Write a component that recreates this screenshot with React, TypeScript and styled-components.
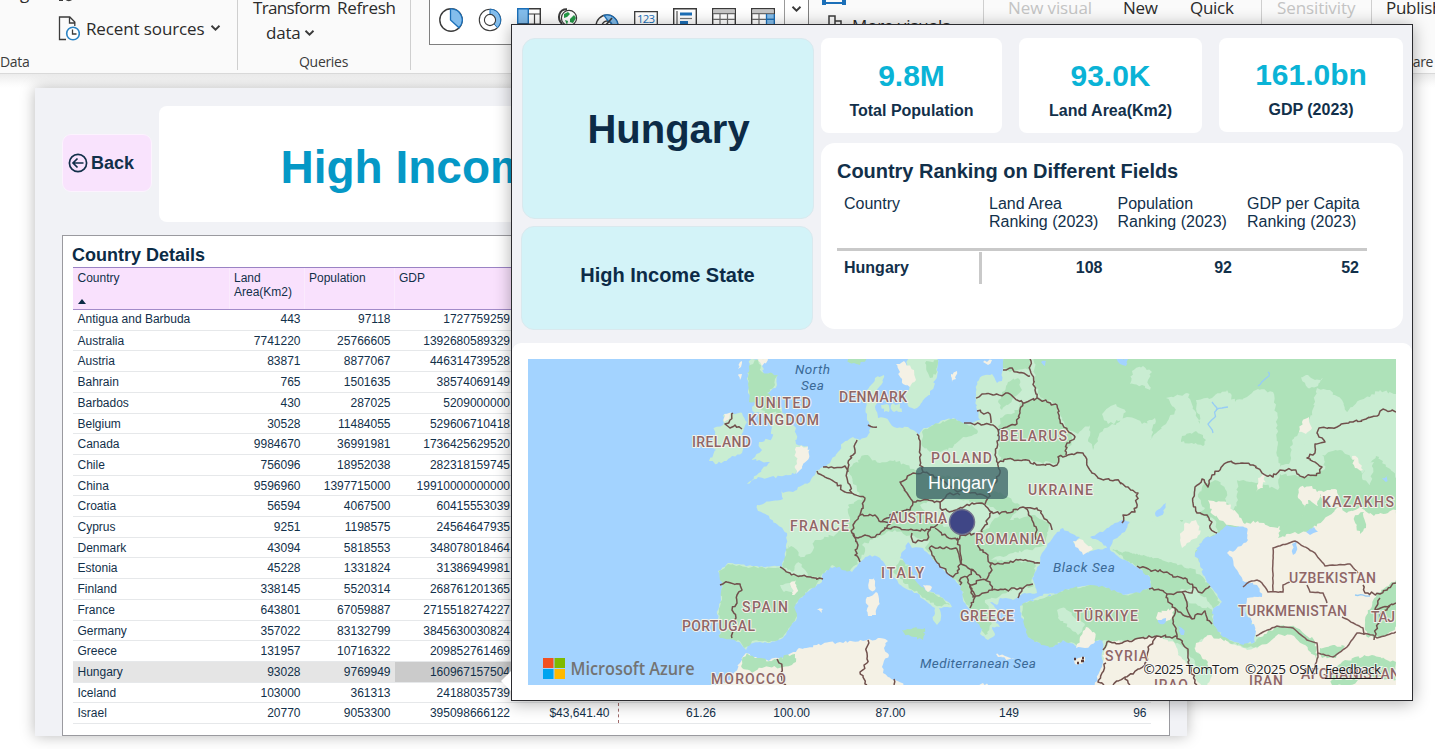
import React from "react";
import styled, { createGlobalStyle } from "styled-components";

const Global = createGlobalStyle`
  html, body { margin: 0; padding: 0; background: #fff; }
  body { overflow: hidden; }
  *, *::before, *::after { box-sizing: border-box; }
`;

const navy = "#12304a";
const arial = `"Liberation Sans", Arial, sans-serif`;
const segoe = `"Open Sans", "Segoe UI", sans-serif`;

const Screen = styled.div`
  position: relative;
  width: 1435px;
  height: 749px;
  overflow: hidden;
  background: #fff;
  font-family: ${arial};
  color: ${navy};
`;

/* ---------- Ribbon ---------- */

const Ribbon = styled.header`
  position: relative;
  display: flex;
  height: 74px;
  overflow: hidden;
  background: #fafafa;
  border-bottom: 1px solid #d9d9d9;
  font-family: ${segoe};
  color: #2b2b2b;
`;

const RibbonShade = styled.div`
  height: 14px;
  background: linear-gradient(#ececec, #fbfbfb 70%, #fff);
`;

const Group = styled.section<{ $w: number; $last?: boolean }>`
  flex: none;
  display: flex;
  flex-direction: column;
  width: ${(p) => p.$w}px;
  height: 70px;
  border-right: ${(p) => (p.$last ? "0" : "1px solid #cfcfcf")};
`;

const GroupBody = styled.div<{ $left?: number }>`
  flex: none;
  display: flex;
  height: 57px;
  margin-top: -5px;
  padding-left: ${(p) => p.$left ?? 0}px;
`;

const GroupLabel = styled.div<{ $left?: number }>`
  flex: none;
  padding-left: ${(p) => p.$left ?? 0}px;
  font-size: 14px;
  line-height: 20px;
  letter-spacing: -0.3px;
  white-space: nowrap;
  color: #3b3b3b;
`;

const RibbonButton = styled.div<{ $w: number; $off?: boolean; $ls?: number }>`
  flex: none;
  width: ${(p) => p.$w}px;
  font-size: 17px;
  line-height: 25px;
  letter-spacing: ${(p) => p.$ls ?? -0.3}px;
  white-space: nowrap;
  color: ${(p) => (p.$off ? "#c4c4c4" : "#2b2b2b")};
`;

const SecondLine = styled.div`
  display: flex;
  align-items: center;
  gap: 3px;
  padding-left: 13px;
  letter-spacing: -0.2px;
`;

const UpperCommand = styled.div`
  width: 58px;
  margin-top: -15px;
  padding-left: 20px;
  font-size: 17px;
  line-height: 25px;
`;

const SourceList = styled.div`
  display: flex;
  flex-direction: column;
`;

const SourceRow = styled.div<{ $h: number }>`
  display: flex;
  align-items: center;
  gap: 6px;
  height: ${(p) => p.$h}px;
  font-size: 17px;
  letter-spacing: -0.12px;
  white-space: nowrap;
`;

const Gallery = styled.div`
  display: flex;
  align-items: flex-start;
  width: 380px;
  height: 50px;
  margin-left: 18px;
  background: #fff;
  border: 1px solid #7f7f7f;
`;

const GalleryIcons = styled.div`
  display: flex;
  gap: 15px;
  width: 355px;
  padding: 12px 0 0 9px;
`;

const GalleryScroll = styled.div`
  width: 24px;
  height: 48px;
  padding: 0 0 0 6px;
  border-left: 1px solid #9a9a9a;
`;

const MoreVisuals = styled.div`
  display: flex;
  flex-direction: column;
  padding-left: 13px;
`;

const Chevron = () => (
  <svg width="11" height="8" viewBox="0 0 11 8" fill="none" stroke="#3a3a3a" strokeWidth="1.9">
    <path d="M1.5 1.8 5.500 5.700l4-3.900" />
  </svg>
);

const ink = "#3b3b3b";
const blue = "#1b6fb8";
const sky = "#83bdec";

const galleryArt: React.ReactNode[] = [
  <>
    <circle cx="12" cy="12" r="11.2" fill="#fff" stroke={ink} strokeWidth="1.4" />
    <path d="M11.5.8a11.2 11.2 0 0 1 8.5 19l-8.5-7.8z" fill={sky} stroke={blue} strokeWidth="1.3" />
  </>,
  <>
    <circle cx="12" cy="12" r="10.7" fill="#fff" stroke={ink} strokeWidth="1.1" />
    <path d="M12 1.2a10.8 10.8 0 0 1 7.4 18.5l-3.6-4A5.6 5.6 0 0 0 12 6.4z" fill={sky} stroke={blue} />
    <circle cx="12" cy="12" r="5.6" fill="#fff" stroke={ink} strokeWidth="1.1" />
  </>,
  <>
    <path d="M.7.7h22.6v22.6H.7z" fill="#fff" stroke={ink} strokeWidth="1.4" />
    <path d="M.7.7h10.6v15H.7z" fill={sky} stroke={blue} strokeWidth="1.4" />
    <path d="M11.5 6h12M17.5 6v10M.7 16h22.6" stroke={ink} strokeWidth="1.2" fill="none" />
  </>,
  <>
    <circle cx="13" cy="10" r="7.6" fill="#fff" stroke={ink} strokeWidth="1.2" />
    <path d="M8 6l4-2 2 2-3 3-3 1zM14 11l4-4 2 3-3 5-3-1zM9 12l3 1-1 4z" fill="#259a48" />
    <path d="M11 1.2C3 1 .5 10 6 16" stroke={ink} strokeWidth="2" fill="none" />
    <path d="M6 16c3 3 8 4 12 1" stroke={ink} strokeWidth="1.5" fill="none" />
  </>,
  <>
    <path d="M1 18a11 11 0 0 1 22 0h-6a5 5 0 0 0-10 0z" fill="#fff" stroke={ink} strokeWidth="1.3" />
    <path d="M9 7.400A11 11 0 0 1 23 18h-6a5 5 0 0 0-4-5z" fill={sky} stroke={blue} strokeWidth="1.3" />
    <path d="M10 18l7-8" stroke={ink} strokeWidth="1.6" />
  </>,
  <>
    <path d="M.7 3.7h22.6v17H.7z" fill="#fff" stroke={ink} strokeWidth="1.3" />
    <text x="3" y="15" fontSize="11.5" textLength="18" fontFamily="Open Sans, sans-serif" fill={blue}>123</text>
  </>,
  <>
    <path d="M.7.7h22.6v22.6H.7z" fill="#fff" stroke={ink} strokeWidth="1.4" />
    <path d="M4 3v18" stroke="#777" strokeWidth="1.5" />
    <path d="M7 4.5h12v3H7zM7 13h8v3H7z" fill={blue} />
    <path d="M7 10.5h12" stroke="#777" strokeWidth="1.2" />
  </>,
  <>
    <path d="M.7.7h22.6v22.6H.7z" fill="#fff" stroke={ink} strokeWidth="1.4" />
    <path d="M1.4 1.4h21.2v4H1.4z" fill="#c6c6c6" />
    <path d="M1 5.7h22M1 11.3h22M1 17h22M8 6v17M15.5 6v17" stroke="#6b6b6b" strokeWidth="1.2" />
  </>,
  <>
    <path d="M.7.7h22.6v22.6H.7z" fill="#fff" stroke={ink} strokeWidth="1.4" />
    <path d="M1.4 1.4h21.2v4H1.4z" fill="#c6c6c6" />
    <path d="M15.5 6h7.3v17h-7.3z" fill={sky} />
    <path d="M1 5.7h22M1 11.3h22M1 17h22M8 6v17" stroke="#6b6b6b" strokeWidth="1.2" />
    <path d="M15.5 6v17M23.3 6v17M15.5 11.3h8" stroke={blue} strokeWidth="1.3" />
  </>,
];

/* ---------- Report page ---------- */

const ReportPage = styled.main`
  display: flex;
  flex-direction: column;
  width: 1152px;
  height: 648px;
  margin-left: 35px;
  background: #f1f2f6;
  box-shadow: 0 0 14px rgba(0, 0, 0, 0.28);
`;

const PageHead = styled.div`
  display: flex;
  align-items: flex-start;
  height: 147px;
  padding: 18px 0 0 27px;
`;

const BackButton = styled.div`
  display: flex;
  align-items: center;
  gap: 3px;
  width: 90px;
  height: 58px;
  margin-top: 28px;
  padding-left: 5px;
  border: 1px solid #fcf3fe;
  border-radius: 9px;
  background: #f9e3fd;
  font-size: 18px;
  font-weight: 700;
`;

const TitleCard = styled.div`
  width: 1001px;
  height: 116px;
  margin-left: 7px;
  padding: 35px 0 0 121.500px;
  border-radius: 8px;
  background: #fff;
  font-size: 46px;
  line-height: 52px;
  font-weight: 700;
  color: #0598c6;
`;

const TableCard = styled.section`
  width: 1108px;
  height: 501px;
  margin-left: 27px;
  padding: 9px 0 0 10px;
  border: 1px solid #9a9a9f;
  background: #fff;
`;

const TableTitle = styled.h2`
  height: 22px;
  margin: 0 0 0 -1px;
  font-size: 18px;
  line-height: 20px;
  color: #0b2b45;
`;

const columns = "156.5px 75px 90px 119.5px 104.5px 101.5px 94px 95.5px 113.5px 127.5px";

const HeadRow = styled.div`
  display: grid;
  grid-template-columns: ${columns};
  width: 1078px;
  height: 43px;
  border-top: 1px solid #9a83c4;
  border-bottom: 1px solid #a28bc9;
  background: #f9e1fd;
`;

const HeadCell = styled.div`
  padding: 3px 0 0 4.500px;
  border-right: 1px solid #fbeafd;
  font-size: 12px;
  line-height: 14px;
`;

const SortMark = styled.div`
  width: 0;
  margin-top: 14px;
  border: 4.5px solid transparent;
  border-top: 0;
  border-bottom: 5px solid #0b2b45;
`;

const BodyRow = styled.div<{ $on?: boolean }>`
  display: grid;
  grid-template-columns: ${columns};
  width: 1078px;
  height: 20.715px;
  border-bottom: 1px solid #e6e8ea;
  background: ${(p) => (p.$on ? "#e5e5e5" : "transparent")};
`;

const Cell = styled.div<{ $name?: boolean; $on?: boolean; $edge?: boolean; $first?: boolean }>`
  padding: 0 ${(p) => (p.$edge ? 8 : 4)}px 0 4.500px;
  margin-top: ${(p) => (p.$first ? -1 : 0)}px;
  border-right: ${(p) => (p.$edge ? "1px dashed #a06a6a" : "0")};
  background: ${(p) => (p.$on ? "#cbcbcb" : "transparent")};
  font-size: 12px;
  line-height: 20px;
  text-align: ${(p) => (p.$name ? "left" : "right")};
`;

const rows: string[][] = [
  ["Antigua and Barbuda", "443", "97118", "1727759259"],
  ["Australia", "7741220", "25766605", "1392680589329"],
  ["Austria", "83871", "8877067", "446314739528"],
  ["Bahrain", "765", "1501635", "38574069149"],
  ["Barbados", "430", "287025", "5209000000"],
  ["Belgium", "30528", "11484055", "529606710418"],
  ["Canada", "9984670", "36991981", "1736425629520"],
  ["Chile", "756096", "18952038", "282318159745"],
  ["China", "9596960", "1397715000", "19910000000000"],
  ["Croatia", "56594", "4067500", "60415553039"],
  ["Cyprus", "9251", "1198575", "24564647935"],
  ["Denmark", "43094", "5818553", "348078018464"],
  ["Estonia", "45228", "1331824", "31386949981"],
  ["Finland", "338145", "5520314", "268761201365"],
  ["France", "643801", "67059887", "2715518274227"],
  ["Germany", "357022", "83132799", "3845630030824"],
  ["Greece", "131957", "10716322", "209852761469"],
  ["Hungary", "93028", "9769949", "160967157504"],
  ["Iceland", "103000", "361313", "24188035739"],
  ["Israel", "20770", "9053300", "395098666122", "$43,641.40", "61.26", "100.00", "87.00", "149", "96"],
];

/* ---------- Report tooltip ---------- */

const Popup = styled.aside`
  position: absolute;
  left: 511px;
  top: 24px;
  width: 902px;
  height: 677px;
  border: 1px solid #2b2b2f;
  background: #f1f2f6;
  box-shadow: 0 2px 16px rgba(0, 0, 0, 0.32);
`;

const PopupArrow = styled.div`
  position: absolute;
  left: -11px;
  top: 646px;
  border: 10px solid transparent;
  border-left: 0;
  border-right: 10px solid #fff;
`;

const PopupTop = styled.div`
  display: flex;
  gap: 7px;
  height: 318px;
  padding: 13px 0 0 10px;
`;

const HeroColumn = styled.div`
  display: flex;
  flex-direction: column;
  gap: 7px;
  width: 292px;
`;

const Hero = styled.div<{ $h: number; $size: number; $shift: number; $drop: number }>`
  display: flex;
  align-items: center;
  justify-content: center;
  width: 292px;
  height: ${(p) => p.$h}px;
  margin-left: ${(p) => p.$shift}px;
  padding: ${(p) => p.$drop}px 0 6px 1px;
  border: 1px solid #d9e9ee;
  border-radius: 13px;
  background: #d3f3f8;
  font-size: ${(p) => p.$size}px;
  font-weight: 700;
  color: #0c2b47;
`;

const StatColumn = styled.div`
  display: flex;
  flex-direction: column;
  gap: 10px;
`;

const StatRow = styled.div`
  display: flex;
  align-items: flex-start;
  gap: 17px;
  height: 95px;
`;

const StatCard = styled.div<{ $w: number; $lift?: boolean }>`
  width: ${(p) => p.$w}px;
  height: ${(p) => (p.$lift ? 94 : 95)}px;
  padding-top: ${(p) => (p.$lift ? 20 : 21)}px;
  border-radius: 8px;
  background: #fff;
  text-align: center;
  font-weight: 700;
`;

const StatValue = styled.div`
  font-size: 30px;
  line-height: 34px;
  color: #0ab3d6;
`;

const StatLabel = styled.div`
  margin-top: 9px;
  font-size: 16px;
  line-height: 18px;
`;

const RankCard = styled.section`
  width: 582px;
  height: 186px;
  padding: 17px 0 0 16px;
  border-radius: 14px;
  background: #fff;
`;

const RankTitle = styled.h3`
  margin: 0;
  font-size: 20px;
  line-height: 22px;
  letter-spacing: -0.03px;
`;

const RankGrid = styled.div<{ $head?: boolean }>`
  display: grid;
  grid-template-columns: 145px 128.5px 129.5px 127px;
  width: 530px;
  height: ${(p) => (p.$head ? 56 : 32)}px;
  margin-top: ${(p) => (p.$head ? 13 : 1)}px;
  border-bottom: ${(p) => (p.$head ? "3px solid #c9c9c9" : "0")};
  font-size: 16px;
  line-height: ${(p) => (p.$head ? 18 : 31)}px;
  font-weight: ${(p) => (p.$head ? 400 : 700)};
`;

const RankCell = styled.div<{ $num?: boolean; $pad?: number; $rule?: boolean }>`
  padding-left: 7px;
  padding-right: ${(p) => p.$pad ?? 0}px;
  text-align: ${(p) => (p.$num ? "right" : "left")};
  border-right: ${(p) => (p.$rule ? "3px solid #c9c9c9" : "0")};
  white-space: nowrap;
`;

const MapPanel = styled.div`
  position: relative;
  height: 357px;
  padding: 16px;
  border-radius: 9px 9px 0 0;
  background: #fff;
`;

const MapSvg = styled.svg`
  display: block;
`;

const MapTip = styled.div`
  position: absolute;
  left: 404px;
  top: 124px;
  width: 92px;
  height: 32px;
  border-radius: 5px;
  background: rgba(58, 98, 101, 0.77);
  font-size: 18px;
  line-height: 32px;
  text-align: center;
  color: #fff;
`;

/* ---------- Map drawing ---------- */

type Pt = [number, number];

const parse = (s: string): Pt[] =>
  s.trim().split(/\s+/).map((p) => p.split(",").map(Number) as Pt);

// Breaks straight segments into small deterministic wiggles, as coasts and frontiers have.
const rough = (s: string, amp: number, closed = false): string => {
  const pts = parse(s);
  if (closed) pts.push(pts[0]);
  let seed = Math.round(pts[0][0] * 31 + pts[0][1] * 17);
  const rnd = () => {
    seed = (seed * 1103515245 + 12345) % 2147483648;
    return seed / 2147483648 - 0.5;
  };
  const out: string[] = [`M${pts[0][0]} ${pts[0][1]}`];
  for (let i = 1; i < pts.length; i++) {
    const [x0, y0] = pts[i - 1];
    const [x1, y1] = pts[i];
    const len = Math.hypot(x1 - x0, y1 - y0);
    const n = Math.max(1, Math.round(len / 2.6));
    for (let k = 1; k <= n; k++) {
      const t = k / n;
      const j = k === n ? 0 : amp;
      out.push(`L${(x0 + (x1 - x0) * t + rnd() * j).toFixed(1)} ${(y0 + (y1 - y0) * t + rnd() * j).toFixed(1)}`);
    }
  }
  return out.join("") + (closed ? "Z" : "");
};

const light = "#c9edd2";
const mid = "#aee2b9";
const sand = "#f4f1e5";
const sea = "#a3d3ff";

const areas: [string, string][] = [
  [light, "1003,355 1003,368 1002,381 997,383 992,374 982,376 977,382 976,400 977,410 980,420 972,423 965,425 953,418 943,420 930,427 922,430 919,435 913,430 908,427 897,428 890,423 885,418 878,418 875,407 878,400 877,390 883,382 884,375 875,378 867,390 866,407 867,420 871,427 867,437 860,440 853,437 843,443 838,452 830,463 823,467 817,470 810,482 798,487 797,490 783,493 781,489 783,499 772,501 757,505 758,511 767,515 778,525 787,533 785,557 782,567 752,566 728,563 718,571 722,582 721,600 717,614 720,625 720,638 732,638 741,644 746,650 750,643 760,642 770,643 783,638 790,627 797,618 794,608 798,600 810,590 822,582 823,573 830,567 843,568 852,572 860,562 870,555 880,558 887,568 893,577 903,587 917,593 927,602 935,608 933,620 937,625 941,617 939,608 952,607 943,598 932,592 923,590 913,578 910,567 900,558 902,545 908,542 912,548 923,548 937,563 953,578 962,587 963,600 970,610 977,620 982,627 980,634 988,640 995,635 992,627 1000,627 993,618 999,612 990,602 997,605 1000,598 1013,600 1025,593 1037,593 1035,585 1032,578 1040,563 1042,553 1050,542 1057,532 1063,528 1070,533 1080,537 1073,542 1083,553 1095,550 1107,548 1098,540 1090,537 1105,530 1122,520 1130,522 1125,532 1113,540 1110,550 1120,558 1137,567 1150,577 1151,588 1140,593 1123,595 1107,588 1090,585 1073,588 1060,593 1043,598 1027,602 1020,606 1021,617 1027,625 1028,637 1040,643 1053,647 1063,640 1080,647 1090,642 1103,640 1102,653 1102,667 1098,680 1095,690 1400,690 1400,355"],
  // Northern forests
  [mid, "1034,355 1035,385 1040,397 1057,404 1062,420 1068,430 1078,434 1090,425 1088,440 1093,450 1103,430 1127,417 1138,420 1142,424 1155,418 1150,440 1166,424 1176,410 1166,398 1187,393 1193,407 1200,424 1196,400 1212,398 1227,390 1235,402 1247,397 1258,389 1273,392 1277,420 1277,450 1280,467 1289,464 1292,440 1306,426 1312,412 1317,388 1330,390 1342,400 1347,412 1360,400 1380,390 1400,397 1400,355"],
  [light, "1102,414 1108,408 1116,404 1126,412 1122,420 1108,424"],
  [light, "1132,371 1143,366 1152,372 1148,380 1150,390 1142,385 1130,384"],
  [light, "1301,377 1308,375 1315,380 1323,378 1318,386 1308,388"],
  [mid, "1182,436 1196,431 1206,440 1203,446 1194,444 1181,442"],
  [mid, "998,433 1000,418 1018,410 1022,402 1037,398 1057,405 1060,420 1068,430 1072,440 1066,453 1057,463 1040,462 1023,459 1000,461"],
  [mid, "1003,355 1003,368 1010,372 1030,368 1030,355"],
  [mid, "1008,382 1018,378 1022,390 1012,400 1002,410 998,402"],
  // Central Europe
  [mid, "922,432 943,421 953,419 972,425 978,432 960,440 948,450 930,452 922,446"],
  [mid, "848,470 865,455 880,463 895,460 915,470 925,474 960,478 985,490 1000,492 1020,505 1010,520 1035,515 1050,525 1045,545 1030,550 1000,556 990,560 1030,562 1036,566 1032,578 1034,586 1015,588 1000,596 985,600 990,610 995,618 985,635 975,618 964,600 961,586 950,575 937,562 925,548 930,540 905,535 895,530 885,534 870,540 860,560 850,571 832,565 820,578 810,578 798,560 812,552 815,540 835,535 850,520 848,505 862,500"],
  [light, "920,505 945,497 965,500 985,505 1002,512 985,530 970,534 955,530 930,520"],
  [light, "862,545 880,538 900,545 908,541 902,552 898,558 880,556 870,553"],
  [mid, "900,560 910,568 915,580 925,590 940,597 950,605 940,606 925,598 905,584 893,572"],
  [mid, "728,564 752,567 782,568 790,574 822,579 812,588 800,598 795,606 797,616 790,627 783,637 770,642 752,641 745,648 738,640 720,638 720,625 718,614 722,600 722,582 719,571"],
  [sand, "790,583 796,580 797,592 792,595"],
  [light, "780,585 790,583 793,592 784,592"],
  [mid, "785,557 788,545 797,550 800,560 792,572 783,568"],
  // Anatolia and Caucasus
  [mid, "1022,604 1043,598 1060,592 1073,588 1090,585 1107,588 1123,595 1140,593 1151,588 1150,577 1137,567 1112,550 1140,554 1170,562 1190,568 1203,577 1214,592 1220,602 1212,610 1214,625 1225,637 1240,644 1255,642 1270,635 1290,628 1278,640 1255,648 1225,642 1200,640 1196,652 1210,662 1215,672 1198,668 1186,650 1170,638 1140,642 1105,640 1090,642 1080,647 1063,640 1053,647 1040,643 1028,637 1024,620"],
  [light, "1057,610 1065,608 1075,618 1085,625 1078,635 1070,628 1058,618"],
  [light, "1180,590 1196,588 1210,604 1213,610 1200,606 1186,600"],
  [sand, "1158,612 1175,608 1170,620 1160,622 1156,618"],
  [sand, "1080,637 1086,627 1094,632 1095,642 1085,648 1076,648"],
  [sand, "1073,541 1083,540 1093,549 1083,555 1078,548"],
  // Kazakh steppe
  [mid, "1203,485 1215,480 1226,488 1237,480 1250,482 1265,485 1278,490 1280,474 1305,478 1325,469 1322,455 1340,450 1357,462 1362,474 1376,456 1400,480 1400,560 1180,560 1180,520 1190,522 1205,508 1198,497"],
  [light, "1226,470 1236,472 1238,500 1232,515 1226,500"],
  [light, "1365,465 1374,462 1370,485 1362,478"],
  [light, "1300,445 1312,440 1318,455 1300,462 1294,458"],
  [sand, "1352,456 1358,458 1363,470 1355,468"],
  [sand, "1302,422 1309,417 1312,428 1306,434 1299,432"],
  [sand, "1258,478 1266,474 1263,488 1256,492"],
  [light, "1182,522 1195,512 1215,520 1217,533 1203,540 1195,553 1200,563 1190,568 1168,560 1110,548 1125,532 1130,522 1150,520"],
  [sand, "1180,540 1184,524 1196,520 1200,534 1190,542 1182,548"],
  [sand, "1208,500 1226,502 1237,513 1245,524 1258,521 1270,527 1282,526 1280,536 1290,533 1300,523 1306,510 1298,498 1300,487 1312,486 1317,492 1337,490 1340,507 1347,513 1360,507 1374,516 1396,510 1400,560 1400,690 1205,690 1212,676 1208,662 1196,652 1196,643 1210,635 1228,642 1247,650 1267,644 1286,630 1270,636 1256,636 1230,560 1226,553 1245,530 1225,523 1212,514"],
  [mid, "1280,526 1300,522 1308,500 1318,506 1320,494 1332,506 1340,508 1325,518 1308,532 1290,534 1278,538"],
  [mid, "1256,640 1277,626 1295,627 1314,640 1318,660 1308,650 1294,636 1278,634 1258,645"],
  [mid, "1320,648 1333,645 1345,646 1336,658 1322,658"],
  [mid, "1365,620 1376,595 1396,580 1400,625 1380,638 1366,636"],
  [mid, "1330,672 1345,660 1372,655 1396,662 1396,680 1370,676 1350,685 1332,685"],
  [mid, "1354,518 1364,512 1366,528 1360,534"],
  [sand, "1108,643 1140,639 1158,636 1174,642 1178,655 1192,668 1202,690 1092,690 1102,667 1104,652"],
  // North Africa
  [sand, "710,687 730,680 740,663 746,653 753,657 767,660 783,658 797,650 817,645 840,642 867,640 880,638 888,641 884,648 889,655 882,667 883,673 895,680 907,687"],
  [mid, "742,661 747,653 755,658 770,661 795,654 796,662 783,667 762,668 752,673 742,668"],
  [sand, "975,687 983,683 992,687"],
  // British Isles and Ireland
  [light, "750,360 768,356 762,366 764,374 778,375 777,385 767,395 777,400 782,410 790,420 796,428 796,444 807,446 808,457 800,470 795,474 783,476 767,478 758,477 747,484 757,475 763,468 770,462 752,460 755,457 762,450 759,442 772,438 772,427 763,413 755,413 752,407 755,402 748,393 748,377"],
  [mid, "750,365 758,360 762,372 778,375 775,385 767,393 778,402 782,412 765,414 757,402 749,402 748,377"],
  [sand, "758,358 768,358 762,366"],
  [sand, "796,447 808,446 809,458 800,470 796,474"],
  [sand, "740,362 742,361 741,367 738,369"],
  [sand, "738,375 742,374 740,380"],
  [light, "712,427 723,425 723,415 730,413 742,413 747,422 743,432 743,440 742,453 730,458 717,464 709,461 716,450 706,446 716,436"],
  [sand, "724,414 731,412 728,420 724,422"],
  // Scandinavia
  [light, "908,358 937,355 938,372 930,395 925,398 917,408 909,407 905,395 911,382 905,370"],
  [sand, "896,364 904,361 914,370 916,380 910,387 903,384"],
  [mid, "845,355 872,355 860,365 850,363"],
  [mid, "925,363 938,360 937,372 930,378"],
  [light, "891,405 900,403 902,412 894,412"],
  [light, "881,405 887,404 889,412 884,412"],
  [sand, "951,374 957,371 956,379 952,382"],
  [sand, "983,362 992,360 988,365"],
  // Mediterranean islands
  [sand, "869,579 875,576 875,590 870,590"],
  [sand, "867,597 876,592 879,602 876,615 868,616"],
  [mid, "902,630 913,628 925,628 923,640 914,637 904,633"],
  [sand, "996,654 1005,656 1015,658 1010,659 998,657"],
  [sand, "817,610 823,609 822,613"],
  [sand, "923,585 932,587 928,592"],
  [sand, "1073,660 1085,657 1082,664 1075,664"],
  // Inland waters
  [sea, "1217,533 1227,525 1247,528 1248,540 1237,548 1227,553 1233,560 1237,570 1245,582 1257,585 1262,597 1247,598 1245,610 1255,630 1255,642 1240,644 1223,637 1213,623 1213,610 1222,602 1215,592 1203,575 1200,563 1195,553 1203,540"],
  [sea, "1116,357 1128,359 1126,366 1120,364"],
  [sea, "1292,544 1297,541 1296,552 1293,555"],
  [sea, "1306,532 1314,527 1318,532 1310,535"],
  [sea, "1155,513 1166,503 1164,512 1157,517"],
  [sea, "1158,620 1166,618 1164,624 1160,624"],
  [sea, "1178,626 1184,630 1185,637 1181,635"],
  [sea, "1382,478 1389,475 1386,482"],
  [sea, "1041,362 1046,361 1045,366"],
  [light, "1055,593 1040,596 1030,600 1040,599"],
];

const rivers = [
  "1212,402 1217,408 1214,418 1208,424 1213,433",
  "1216,410 1222,408 1228,407",
  "1258,386 1264,380 1269,376 1268,372",
  "1355,595 1370,596",
];

const frontiers = [
  "1003,370 1010,368 1017,372 1030,376",
  "1030,359 1031,373 1035,390 1037,398 1023,403",
  "976,398 982,394 993,395 1010,394 1017,400 1023,403",
  "1037,398 1047,402 1057,405 1060,420 1067,430 1075,437 1067,443 1066,455",
  "998,463 1007,459 1023,460 1040,465 1057,465 1058,457 1066,456 1072,454 1083,453 1088,467 1098,478 1115,480 1128,487 1138,493 1135,512 1123,515 1122,523",
  "1023,403 1020,413 1015,425 1007,427 998,430",
  "977,411 990,414 991,423",
  "964,423 980,424 993,425 998,430 999,440 995,455 998,463 1000,473 993,487 988,498",
  "917,434 920,447 920,460 923,472 913,473 900,482 907,493 913,502 923,500 940,502 950,493 960,495",
  "923,472 933,475 945,482 955,490 967,492 980,494 988,498 985,504",
  "940,502 942,510 953,511 962,508 972,503 985,505 992,512 985,525 980,533",
  "992,512 1007,513 1023,507 1037,508 1047,520 1052,530",
  "1025,508 1032,520 1037,530 1036,540",
  "857,440 855,450 848,463 847,472 848,483 852,493 865,498 860,515",
  "817,471 827,478 837,483 845,492 852,493",
  "823,467 834,468 845,466 848,472",
  "860,515 875,515 879,521 890,524 884,530 875,537 865,535 858,538 852,533 853,525 860,515",
  "853,533 858,545 855,555 860,562",
  "882,521 887,518 895,513 910,510 913,502",
  "884,528 900,528 913,530 930,530 937,525 943,520 942,510",
  "912,533 913,542 927,540 930,530",
  "935,528 947,537 957,540 963,535 977,533",
  "930,547 940,547 957,549 960,560 958,573 953,577 940,567 932,555 930,547",
  "957,538 960,548 961,562 968,568 976,573 981,578",
  "977,533 980,550 988,555 990,563 1003,564 1018,560 1028,561 1040,563",
  "990,563 992,570 985,580",
  "970,585 980,580 990,582 992,590 980,595 973,597 970,585",
  "960,585 961,578 967,577 974,570",
  "967,577 970,585 975,597 970,608",
  "992,590 1007,590 1020,588 1027,585 1033,584",
  "1022,588 1018,598",
  "780,567 790,573 800,576 823,579",
  "720,585 727,582 740,584 742,590 737,595 737,603 732,610 736,618 732,627 732,638",
  "733,413 730,420 725,424 730,428 735,425 742,429",
  "868,640 867,653 867,663 860,672 867,685",
  "894,679 894,685",
  "777,659 782,667 780,675 786,685",
  "1137,566 1150,570 1167,572 1173,577 1185,578 1193,587 1202,593 1210,586",
  "1149,589 1160,590 1167,594 1182,592 1192,593 1193,587",
  "1167,594 1168,602 1175,608 1183,615 1192,619",
  "1182,592 1187,603 1188,612 1192,619 1205,611 1207,620 1212,624",
  "1175,608 1173,620 1177,635 1188,652 1188,662 1195,680 1197,685",
  "1103,650 1107,642 1122,643 1140,638 1157,636 1177,637",
  "1157,636 1148,647 1147,657 1145,665 1125,677 1113,685",
  "1106,663 1102,673 1098,682 1104,685",
  "1125,677 1130,685",
  "868,425 877,427",
  "1217,533 1210,528 1212,522 1207,515 1197,513 1193,503 1195,487 1202,479 1208,487 1212,475 1228,462 1242,463 1253,465 1262,473 1273,477 1280,470 1293,470 1303,477 1320,473 1322,467 1307,458 1315,453 1315,444 1325,442 1317,433 1319,428 1337,427 1353,422 1377,416 1383,409 1396,412",
  "1380,598 1375,610 1396,603",
  "1363,585 1365,593 1380,594 1387,590 1396,583",
  "1374,640 1377,627 1382,612 1390,606",
];

const straightFrontiers = [
  "1243,587 1249,582 1257,580 1262,583 1268,592 1283,592 1283,585 1290,582",
  "1273,591 1273,548 1295,541 1315,553 1325,566 1350,564 1358,573",
  "1307,585 1310,592 1323,593 1327,603",
  "1342,617 1363,628 1364,635",
  "1256,636 1263,632 1277,626 1293,628 1307,640 1317,643 1318,657 1312,675",
  "1318,653 1333,657 1347,647 1357,633 1373,635 1377,638 1387,635 1396,632",
];

const Country = styled.text`
  font-family: Roboto, sans-serif;
  font-size: 14px;
  font-weight: 500;
  fill: #8f6666;
  stroke: #f3f3ec;
  stroke-width: 2px;
  stroke-linejoin: round;
  paint-order: stroke;
`;

const SeaName = styled.text`
  font-family: Roboto, sans-serif;
  font-size: 13.500px;
  font-style: italic;
  fill: #3a6996;
`;

const Credit = styled.text`
  font-family: ${segoe};
  font-size: 13.5px;
  fill: #1c1c1c;
  stroke: rgba(255, 255, 255, 0.65);
  stroke-width: 2px;
  paint-order: stroke;
`;

const countries: [string, number, number, number][] = [
  ["UNITED", 755, 407.5, 56],
  ["KINGDOM", 748, 425, 71],
  ["IRELAND", 692, 446.5, 59],
  ["DENMARK", 839, 401.5, 68],
  ["BELARUS", 1000, 440.5, 67],
  ["POLAND", 931, 463, 61],
  ["UKRAINE", 1028, 494.5, 65],
  ["FRANCE", 790, 530.5, 59],
  ["AUSTRIA", 889, 523, 58],
  ["ROMANIA", 975, 544, 70],
  ["ITALY", 881, 577.5, 43],
  ["SPAIN", 742, 611.5, 46],
  ["PORTUGAL", 682, 631, 73],
  ["GREECE", 960, 620.5, 54],
  ["TÜRKIYE", 1074, 620.5, 64],
  ["KAZAKHS", 1322, 506.5, 72],
  ["UZBEKISTAN", 1289, 583, 87],
  ["TURKMENISTAN", 1238, 616, 109],
  ["TAJ", 1371, 622, 24],
  ["SYRIA", 1105, 661, 43],
  ["IRAQ", 1154, 690, 34],
  ["IRAN", 1249, 686, 34],
  ["AFGHANISTAN", 1301, 679, 99],
  ["MOROCCO", 711, 683.5, 75],
];

const EuropeMap = () => (
  <MapSvg width="868" height="326" viewBox="528 359 868 326">
    <rect x="528" y="359" width="868" height="326" fill={sea} />
    {areas.map(([c, d], i) => (
      <path key={i} d={rough(d, i === 0 ? 2 : 3, true)} fill={c} />
    ))}
    {rivers.map((d, i) => (
      <path key={i} d={rough(d, 2)} fill="none" stroke="#97ccf5" strokeWidth="1.3" />
    ))}
    {frontiers.map((d, i) => (
      <path key={i} d={rough(d, 2.8)} fill="none" stroke="#70504c" strokeWidth="1.5" strokeLinejoin="round" />
    ))}
    {straightFrontiers.map((d, i) => (
      <path key={i} d={rough(d, 0.8)} fill="none" stroke="#7b5a57" strokeWidth="1.5" />
    ))}
    {countries.map(([name, x, y, w]) => (
      <Country key={name} x={x} y={y} textLength={w} lengthAdjust={name === "AUSTRIA" ? "spacingAndGlyphs" : "spacing"}>{name}</Country>
    ))}
    <SeaName x="795" y="374" textLength="35">North</SeaName>
    <SeaName x="801" y="389.500" textLength="23">Sea</SeaName>
    <SeaName x="1053" y="572" textLength="62">Black Sea</SeaName>
    <SeaName x="920" y="668" textLength="116">Mediterranean Sea</SeaName>
    <path d="M1074 659h2m1 4h2m3-5h2m-3 3h3" stroke="#5a3c3a" strokeWidth="2.4" />
    <circle cx="962" cy="522" r="12.5" fill="#3f4686" stroke="#72728c" strokeWidth="1.5" />
    <path d="M543 658h10.5v10H543z" fill="#f25022" />
    <path d="M554.500 658H565v10h-10.500z" fill="#7fba00" />
    <path d="M543 669h10.500v10H543z" fill="#00a4ef" />
    <path d="M554.500 669H565v10h-10.500z" fill="#ffb900" />
    <text x="570.5" y="675" fontFamily="Open Sans, sans-serif" fontWeight="600" fontSize="17.5" textLength="124" lengthAdjust="spacingAndGlyphs" fill="#737373">Microsoft Azure</text>
    <Credit x="1143.500" y="674" textLength="95.500">©2025 TomTom</Credit>
    <Credit x="1245" y="674" textLength="73.500">©2025 OSM</Credit>
    <Credit x="1325" y="674" textLength="56">Feedback</Credit>
    <path d="M1325 678.500h56" stroke="#1c1c1c" />
  </MapSvg>
);

export default function App() {
  return (
    <Screen>
      <Global />
      <Ribbon>
        <Group $w={238}>
          <GroupBody>
            <UpperCommand>g</UpperCommand>
            <SourceList>
              <SourceRow $h={20}>
                <svg width="22" height="20" viewBox="0 0 22 20" fill="none" stroke={ink} strokeWidth="1.8">
                  <path d="M1 5h4M7.500 3c1 3 5.500 3 7 0" />
                </svg>
              </SourceRow>
              <SourceRow $h={26}>
                <svg width="22" height="25" viewBox="0 0 22 25" fill="none" stroke={ink} strokeWidth="1.3">
                  <path d="M8 23.500H1.500V1h10.300l5 5v4M11.500 1v6h6" />
                  <circle cx="15" cy="17.500" r="6.300" fill="#fff" stroke="#2a83c4" strokeWidth="1.600" />
                  <path d="M14.500 13.500v4.500h4" />
                </svg>
                Recent sources
                <Chevron />
              </SourceRow>
            </SourceList>
          </GroupBody>
          <GroupLabel $left={0}>Data</GroupLabel>
        </Group>
        <Group $w={173}>
          <GroupBody $left={15}>
            <RibbonButton $w={84} $ls={-0.65}>
              Transform
              <SecondLine>data<Chevron /></SecondLine>
            </RibbonButton>
            <RibbonButton $w={60}>Refresh</RibbonButton>
          </GroupBody>
          <GroupLabel $left={61}>Queries</GroupLabel>
        </Group>
        <Group $w={573}>
          <GroupBody>
            <Gallery>
              <GalleryIcons>
                {galleryArt.map((art, i) => (
                  <svg key={i} width="24" height="24" viewBox="0 0 24 24" fill="none">{art}</svg>
                ))}
              </GalleryIcons>
              <GalleryScroll><Chevron /></GalleryScroll>
            </Gallery>
            <MoreVisuals>
              <SourceRow $h={14}>
                <svg width="24" height="18" viewBox="0 0 24 18" fill={blue}>
                  <path d="M0 7h4v5H0zM20 7h4v5h-4zM4 9h16v2H4z" />
                </svg>
              </SourceRow>
              <SourceRow $h={32}>
                <svg width="24" height="24" viewBox="0 0 24 24" fill="none" stroke={ink} strokeWidth="1.500">
                  <path d="M7 24V3h6v21M13 8h6v16" />
                </svg>
                More visuals
              </SourceRow>
            </MoreVisuals>
          </GroupBody>
        </Group>
        <Group $w={278}>
          <GroupBody $left={24}>
            <RibbonButton $w={115} $off $ls={-0.1}>New visual</RibbonButton>
            <RibbonButton $w={67}>New</RibbonButton>
            <RibbonButton $w={60}>Quick</RibbonButton>
          </GroupBody>
        </Group>
        <Group $w={110}>
          <GroupBody $left={15}>
            <RibbonButton $w={90} $off $ls={-0.1}>Sensitivity</RibbonButton>
          </GroupBody>
        </Group>
        <Group $w={70} $last>
          <GroupBody $left={14}>
            <RibbonButton $w={60}>Publish</RibbonButton>
          </GroupBody>
          <GroupLabel $left={25}>Share</GroupLabel>
        </Group>
      </Ribbon>
      <RibbonShade />

      <ReportPage>
        <PageHead>
          <BackButton>
            <svg width="20" height="20" viewBox="0 0 20 20" fill="none" stroke={navy} strokeWidth="1.700">
              <circle cx="10" cy="10" r="8.600" />
              <path d="M15.500 10H5M9.500 5.500 5 10l4.500 4.500" />
            </svg>
            Back
          </BackButton>
          <TitleCard>High Income</TitleCard>
        </PageHead>
        <TableCard>
          <TableTitle>Country Details</TableTitle>
          <HeadRow>
            <HeadCell>Country<SortMark /></HeadCell>
            <HeadCell>Land Area(Km2)</HeadCell>
            <HeadCell>Population</HeadCell>
            <HeadCell>GDP</HeadCell>
          </HeadRow>
          {rows.map((r, i) => {
            const on = r[0] === "Hungary";
            return (
              <BodyRow key={r[0]} $on={on}>
                {r.map((v, c) => (
                  <Cell key={c} $name={c === 0} $on={on && c === 3} $edge={c === 4} $first={i === 0}>{v}</Cell>
                ))}
              </BodyRow>
            );
          })}
        </TableCard>
      </ReportPage>

      <Popup>
        <PopupArrow />
        <PopupTop>
          <HeroColumn>
            <Hero $h={181} $size={40} $shift={0} $drop={8}>Hungary</Hero>
            <Hero $h={104} $size={20} $shift={-1} $drop={0}>High Income State</Hero>
          </HeroColumn>
          <StatColumn>
            <StatRow>
              <StatCard $w={181}><StatValue>9.8M</StatValue><StatLabel>Total Population</StatLabel></StatCard>
              <StatCard $w={183}><StatValue>93.0K</StatValue><StatLabel>Land Area(Km2)</StatLabel></StatCard>
              <StatCard $w={184} $lift><StatValue>161.0bn</StatValue><StatLabel>GDP (2023)</StatLabel></StatCard>
            </StatRow>
            <RankCard>
              <RankTitle>Country Ranking on Different Fields</RankTitle>
              <RankGrid $head>
                <RankCell>Country</RankCell>
                <RankCell>Land Area<br />Ranking (2023)</RankCell>
                <RankCell>Population<br />Ranking (2023)</RankCell>
                <RankCell>GDP per Capita<br />Ranking (2023)</RankCell>
              </RankGrid>
              <RankGrid>
                <RankCell $rule>Hungary</RankCell>
                <RankCell $num $pad={8}>108</RankCell>
                <RankCell $num $pad={8}>92</RankCell>
                <RankCell $num $pad={8}>52</RankCell>
              </RankGrid>
            </RankCard>
          </StatColumn>
        </PopupTop>
        <MapPanel>
          <EuropeMap />
          <MapTip>Hungary</MapTip>
        </MapPanel>
      </Popup>
    </Screen>
  );
}
